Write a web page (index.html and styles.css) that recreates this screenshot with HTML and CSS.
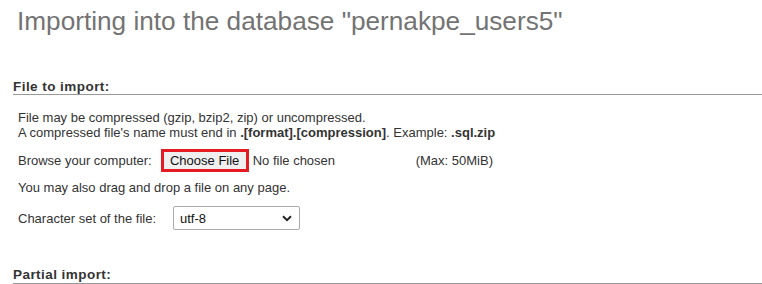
FILE: index.html
```html
<!DOCTYPE html>
<html>
<head>
<meta charset="utf-8">
<link rel="stylesheet" href="styles.css">
</head>
<body>
<div class="page">
  <h2 class="title">Importing into the database "pernakpe_users5"</h2>
  <div class="section">
    <h3 class="section-head">File to import:</h3>
    <div class="section-body">
      <p class="desc">File may be compressed (gzip, bzip2, zip) or uncompressed.<br>A compressed file's name must end in <b>.[format].[compression]</b>. Example: <b>.sql.zip</b></p>
      <div class="row browse">
        <span class="label label-browse">Browse your computer:</span>
        <span class="file-btn-wrap"><span class="file-btn">Choose File</span></span>
        <span class="nofile">No file chosen</span>
        <span class="max">(Max: 50MiB)</span>
      </div>
      <p class="drag">You may also drag and drop a file on any page.</p>
      <div class="row charset">
        <span class="label label-charset">Character set of the file:</span>
        <span class="select">utf-8<svg class="chev" width="10" height="7" viewBox="0 0 10 7"><path d="M1 1.2 L5 5.2 L9 1.2" fill="none" stroke="#222" stroke-width="2"/></svg></span>
      </div>
    </div>
  </div>
  <div class="section section-partial">
    <h3 class="section-head">Partial import:</h3>
  </div>
</div>
</body>
</html>
```

FILE: styles.css
```css
html, body {
  margin: 0;
  padding: 0;
  background: #fff;
}
body {
  font-family: "Liberation Sans", Arial, sans-serif;
  color: #333;
  font-size: 13px;
}
.page {
  padding: 0 0 0 13px;
}
.title {
  margin: 0;
  padding: 4px 0 0 4px;
  font-size: 26.2px;
  font-weight: normal;
  color: #737373;
  line-height: 34px;
}
.section {
  margin-top: 42px;
}
.section-partial {
  margin-top: 38px;
}
.section-head {
  margin: 0;
  font-size: 13.5px;
  letter-spacing: 0.45px;
  font-weight: bold;
  color: #333;
  line-height: 14px;
  padding-bottom: 0;
  border-bottom: 1px solid #999;
}
.section-partial .section-head {
  padding-bottom: 1px;
}
.section-body {
  padding-left: 5px;
}
.desc {
  margin: 15px 0 0;
  line-height: 15px;
}
.row {
  display: flex;
  align-items: center;
}
.browse {
  margin-top: 9px;
}
.label-browse {
  margin-right: 9px;
}
.label-charset {
  margin-right: 17px;
}
.file-btn-wrap {
  border: 3px solid #e51b24;
  display: inline-flex;
  box-sizing: border-box;
  width: 88px;
  height: 23px;
}
.file-btn {
  flex: 1;
  display: flex;
  align-items: center;
  justify-content: center;
  background: #efefef;
  color: #111;
}
.nofile {
  margin-left: 4px;
  width: 163px;
}
.drag {
  margin: 8px 0 0;
}
.charset {
  margin-top: 11px;
}
.select {
  display: inline-flex;
  align-items: center;
  justify-content: space-between;
  box-sizing: border-box;
  width: 127px;
  height: 24px;
  border: 1px solid #aaa;
  border-radius: 2px;
  padding: 0 7px 0 6px;
  color: #111;
}
```
